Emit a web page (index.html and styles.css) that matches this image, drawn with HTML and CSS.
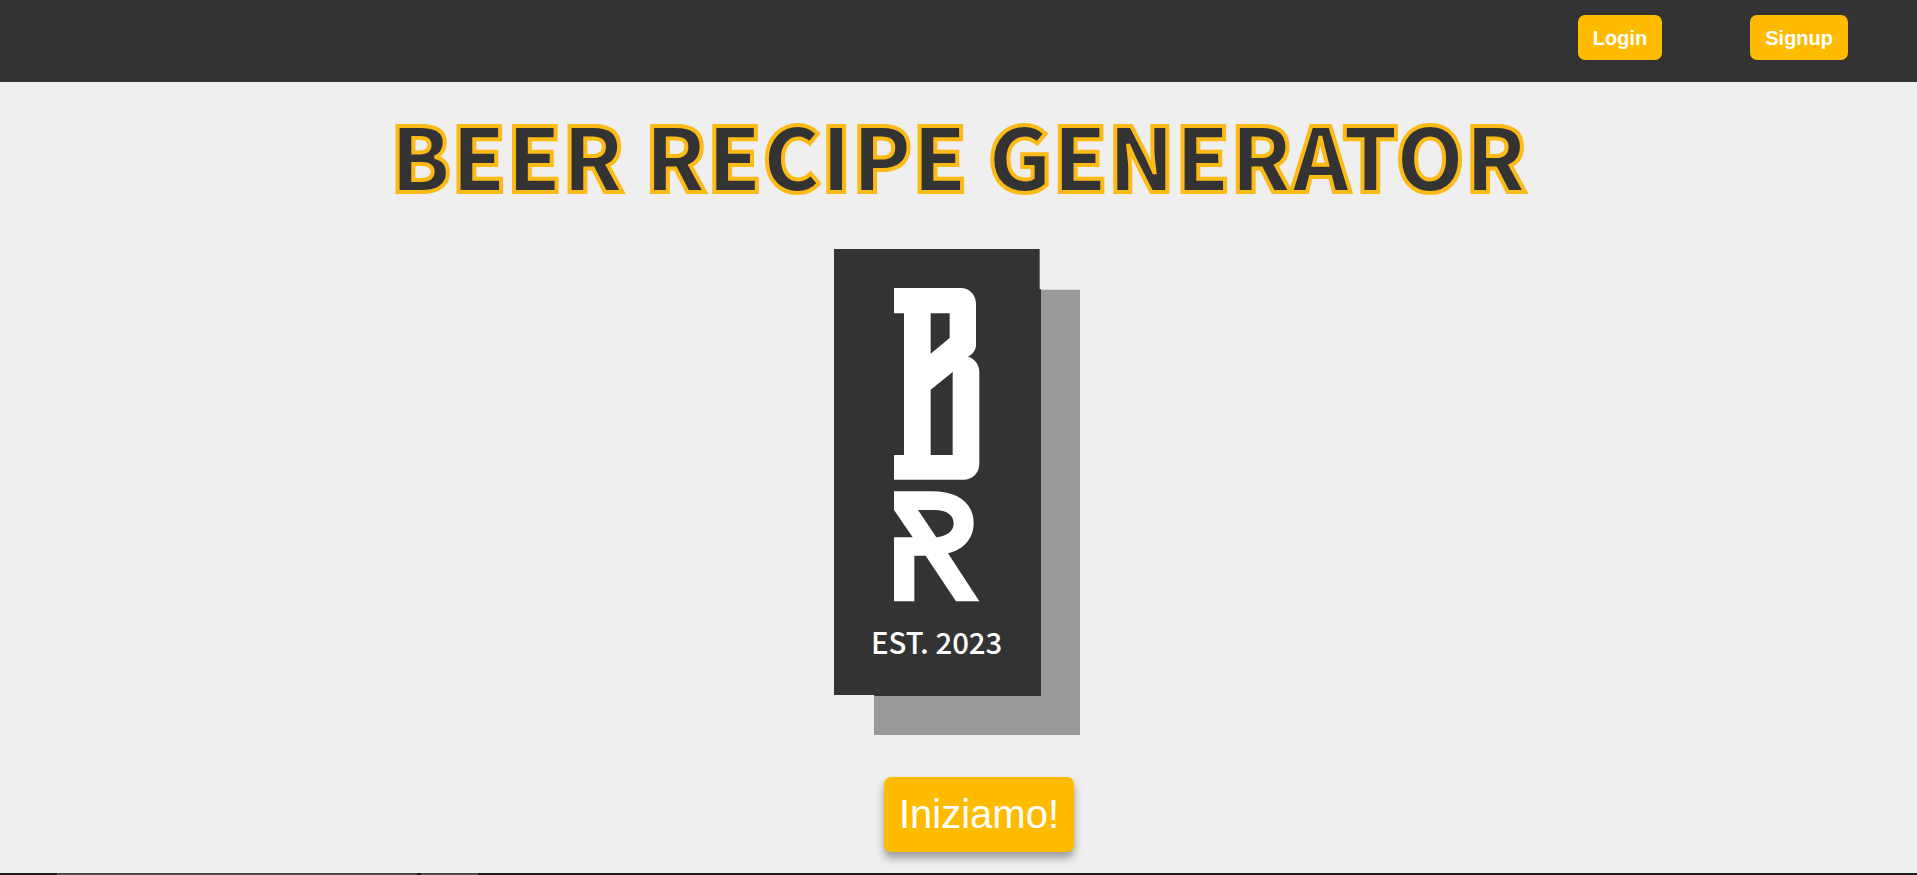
FILE: index.html
```html
<!DOCTYPE html>
<html lang="it">
<head>
<meta charset="utf-8">
<meta name="viewport" content="width=device-width, initial-scale=1">
<title>Beer Recipe Generator</title>
<link rel="stylesheet" href="styles.css">
</head>
<body>
<header class="topbar">
  <button class="btn" type="button">Login</button>
  <button class="btn" type="button">Signup</button>
</header>
<main class="hero">
  <h1 class="title">BEER RECIPE GENERATOR</h1>
  <svg class="logo" viewBox="0 0 738 1458" role="img" aria-label="Logo">
    <path class="logo-shadow" d="M120 122H738V1458H120Z"/>
    <path class="logo-panel" d="M0 0H617V121H621V1341H121V1338H0Z"/>
    <path class="logo-mark" fill-rule="evenodd" d="M180 117H380C408 117 426 139 426 164V289C426 303 415 318 402 323C422 328 436 347 436 369V644C436 672 415 692 388 692H180V618H210V193H180ZM290 193H347V267L290 314ZM290 422L356 369V618H290Z"/>
    <path class="logo-mark" fill-rule="evenodd" d="M180 727H293C372 727 419 762 419 823C419 868 390 902 342 913L436 1057H366L275 920H241V1057H180V865H236L180 783ZM252 783H303C338 783 359 799 359 823C359 848 338 862 307 865Z"/>
    <text class="logo-text" x="308" y="1216">EST. 2023</text>
  </svg>
  <button class="btn btn-start" type="button">Iniziamo!</button>
</main>
<footer class="strip"></footer>
</body>
</html>
```

FILE: styles.css
```css
* {
  box-sizing: border-box;
}

body {
  margin: 0;
  min-height: 100vh;
  display: flex;
  flex-direction: column;
  background: #efefef;
  font-family: "Liberation Sans", Arial, sans-serif;
}

.topbar {
  display: flex;
  justify-content: flex-end;
  gap: 88px;
  padding: 15px 69px 22px;
  background: #333333;
}

.btn {
  border: 0;
  border-radius: 7px;
  padding: 12px 15px 10px;
  background: #ffbb00;
  color: #ffffff;
  font: bold 20px/23px "Liberation Sans", Arial, sans-serif;
  cursor: pointer;
}

.hero {
  flex: 1;
  display: flex;
  flex-direction: column;
  align-items: center;
  padding: 12px 16px 21px;
}

.title {
  margin: 0 0 35px;
  color: #333333;
  font: 900 88px/120px "Noto Sans CJK JP", "Liberation Sans", sans-serif;
  text-align: center;
  -webkit-text-stroke: 4px #fbba16;
}

.logo {
  display: block;
  width: 246px;
  margin-right: 3px;
}

.logo-shadow {
  fill: #999999;
}

.logo-panel {
  fill: #333333;
}

.logo-mark {
  fill: #ffffff;
}

.logo-text {
  fill: #ffffff;
  font: 500 88px "Noto Sans CJK JP", "Liberation Sans", sans-serif;
  text-anchor: middle;
}

.btn-start {
  margin: 42px 0 0 41px;
  padding: 15px;
  font-size: 40px;
  font-weight: normal;
  line-height: 45px;
  box-shadow: 0 6px 8px rgba(0, 0, 0, 0.35);
}

.strip {
  height: 2px;
  background: linear-gradient(90deg, #1c171a 57px, #4a4a4a 57px 417px, #1c171a 417px 421px, #4a4a4a 421px 478px, #1c1b1a 478px);
}
```
